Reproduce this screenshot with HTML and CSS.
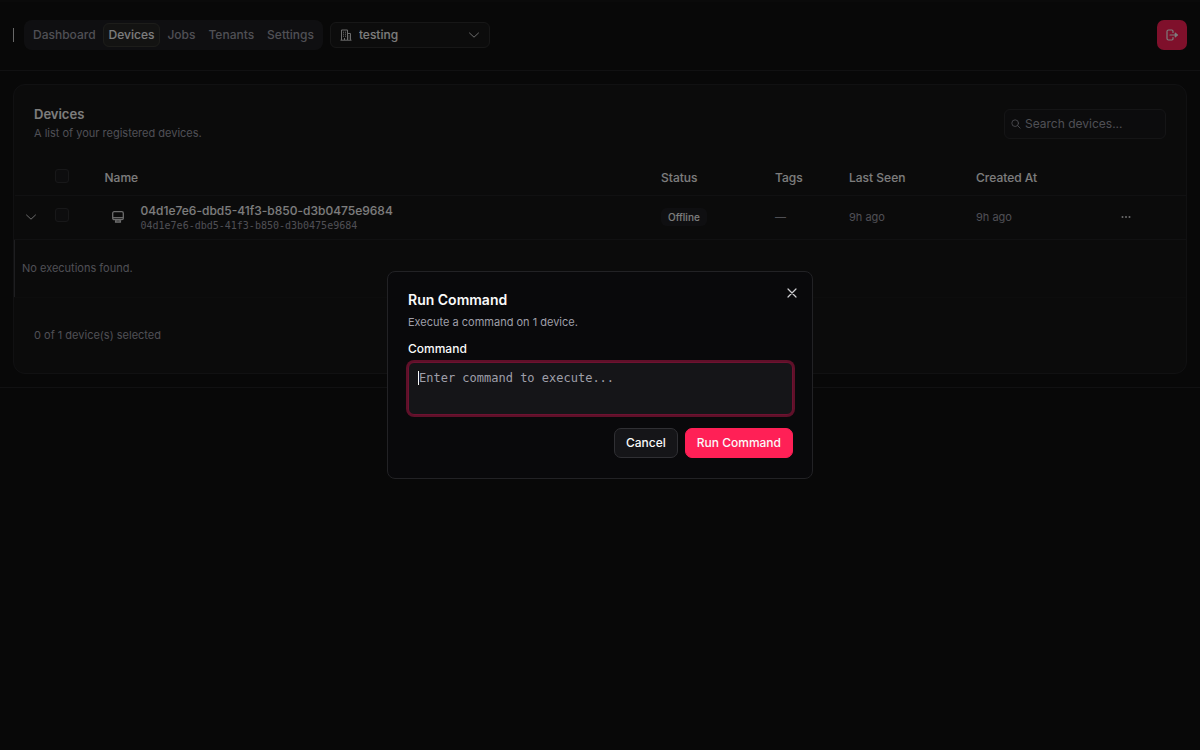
FILE: index.html
```html
<!DOCTYPE html>
<html lang="en">
<head>
  <meta charset="UTF-8">
  <meta name="viewport" content="width=device-width, initial-scale=1.0">
  <title>Devices</title>
  <link rel="stylesheet" href="styles.css">
</head>
<body>

  <div class="app">
    <header class="topbar">
      <span class="brand-mark"></span>
      <nav class="nav">
        <a class="nav-link" href="#">Dashboard</a>
        <a class="nav-link active" href="#">Devices</a>
        <a class="nav-link" href="#">Jobs</a>
        <a class="nav-link" href="#">Tenants</a>
        <a class="nav-link" href="#">Settings</a>
      </nav>
      <div class="tenant-select">
        <svg class="tenant-icon" viewBox="0 0 12 12" fill="none" stroke="currentColor">
          <path d="M1.500 11V1h6v10M7.500 4.500h3V11M0.500 11.200h11"/>
          <path d="M3 3.200h1M5 3.200h1M3 5.200h1M5 5.200h1M3 7.200h1M5 7.200h1M4.500 11V9M9 6.500v1M9 8.500v1"/>
        </svg>
        <select aria-label="Tenant">
          <option>testing</option>
        </select>
        <svg class="tenant-chevron" viewBox="0 0 12 12" fill="none" stroke="currentColor" stroke-linecap="round" stroke-linejoin="round">
          <path d="M1.500 4L6 8.200 10.500 4"/>
        </svg>
      </div>
      <button class="logout" aria-label="Log out">
        <svg viewBox="0 0 12 12" fill="none" stroke="currentColor" stroke-width="1.2" stroke-linecap="round" stroke-linejoin="round">
          <path d="M7 3.500V2.200Q7 1 5.800 1H2.500Q1 1 1 2.500v7Q1 11 2.500 11h3.300Q7 11 7 9.800V8.500M4 6h7"/>
          <path d="M9.300 4.200L11.300 6 9.300 7.800z" fill="currentColor"/>
        </svg>
      </button>
    </header>

    <main class="content">
      <section class="card">
        <div class="card-header">
          <div>
            <h1>Devices</h1>
            <p>A list of your registered devices.</p>
          </div>
          <div class="search">
            <svg viewBox="0 0 12 12" fill="none" stroke="currentColor" stroke-linecap="round">
              <circle cx="5" cy="5" r="4"/>
              <path d="M8 8L11 11"/>
            </svg>
            <input type="search" aria-label="Search devices" placeholder="Search devices...">
          </div>
        </div>

        <table class="devices">
          <colgroup>
            <col class="col-expand">
            <col class="col-check">
            <col class="col-name">
            <col class="col-status">
            <col class="col-tags">
            <col class="col-seen">
            <col class="col-created">
            <col class="col-actions">
          </colgroup>
          <thead>
            <tr>
              <th></th>
              <th><input type="checkbox" aria-label="Select all"></th>
              <th>Name</th>
              <th>Status</th>
              <th>Tags</th>
              <th>Last Seen</th>
              <th>Created At</th>
              <th></th>
            </tr>
          </thead>
          <tbody>
            <tr class="device-row">
              <td>
                <button class="icon-button" aria-label="Collapse row">
                  <svg viewBox="0 0 12 12" fill="none" stroke="currentColor" stroke-linecap="round" stroke-linejoin="round">
                    <path d="M1.500 4L6 8.200 10.500 4"/>
                  </svg>
                </button>
              </td>
              <td><input type="checkbox" aria-label="Select device"></td>
              <td>
                <div class="device">
                  <svg viewBox="0 0 12 12" fill="none" stroke="currentColor" stroke-width="1.3" stroke-linejoin="round">
                    <rect x="0.700" y="0.700" width="10.600" height="8" rx="1.500"/>
                    <path d="M1 6.700h10"/>
                    <path d="M4 8.700h4l.5 2.500h-5z" fill="currentColor" fill-opacity="0.5"/>
                  </svg>
                  <div>
                    <div class="device-name">04d1e7e6-dbd5-41f3-b850-d3b0475e9684</div>
                    <div class="device-id">04d1e7e6-dbd5-41f3-b850-d3b0475e9684</div>
                  </div>
                </div>
              </td>
              <td><span class="badge">Offline</span></td>
              <td class="muted">—</td>
              <td class="muted">9h ago</td>
              <td class="muted">9h ago</td>
              <td>
                <button class="icon-button" aria-label="Device actions">
                  <svg viewBox="0 0 12 12" fill="currentColor">
                    <circle cx="2.500" cy="6" r="1"/>
                    <circle cx="6" cy="6" r="1"/>
                    <circle cx="9.500" cy="6" r="1"/>
                  </svg>
                </button>
              </td>
            </tr>
            <tr class="executions">
              <td colspan="8">No executions found.</td>
            </tr>
          </tbody>
        </table>

        <div class="card-footer">0 of 1 device(s) selected</div>
      </section>
    </main>
  </div>

  <div class="overlay">
    <form class="dialog" role="dialog" aria-labelledby="dialog-title">
      <button type="button" class="dialog-close" aria-label="Close">
        <svg viewBox="0 0 12 12" fill="none" stroke="currentColor" stroke-width="1.2" stroke-linecap="round">
          <path d="M2 2l8 8M10 2l-8 8"/>
        </svg>
      </button>
      <h2 id="dialog-title">Run Command</h2>
      <p>Execute a command on 1 device.</p>
      <label for="command">Command</label>
      <div class="command-field">
        <textarea id="command" placeholder="Enter command to execute..."></textarea>
        <span class="caret"></span>
      </div>
      <div class="dialog-actions">
        <button type="button" class="btn">Cancel</button>
        <button type="submit" class="btn btn-primary">Run Command</button>
      </div>
    </form>
  </div>

</body>
</html>
```
FILE: styles.css
```css
* {
  box-sizing: border-box;
}

body {
  margin: 0;
  background: #101010;
  color: #fafafa;
  font-family: Inter, sans-serif;
  font-size: 12px;
  line-height: 16px;
}

h1, h2, p {
  margin: 0;
}

button, input, select, textarea {
  font: inherit;
  color: inherit;
}

button {
  cursor: pointer;
}

svg {
  display: block;
  width: 12px;
  height: 12px;
  flex-shrink: 0;
}

.app {
  border-top: 2px solid #151515;
  border-bottom: 1px solid #222224;
}

/* top bar */

.topbar {
  display: flex;
  align-items: center;
  padding: 18px 13px 20px;
  border-bottom: 1px solid #222224;
}

.brand-mark {
  width: 1px;
  height: 14px;
  margin-right: 10px;
  background: #d0d0d0;
}

.nav {
  display: flex;
  gap: 1px;
  padding: 3px;
  border-radius: 8px;
  background: #1f1f22;
}

.nav-link {
  padding: 3px 5px;
  border: 1px solid transparent;
  border-radius: 6px;
  color: #9f9fa9;
  font-weight: 500;
  text-decoration: none;
}

.nav-link.active {
  background: #272725;
  border-color: #3a3a34;
  color: #fafafa;
}

.tenant-select {
  position: relative;
  width: 160px;
  margin-left: 7px;
}

.tenant-select select {
  display: block;
  width: 100%;
  height: 26px;
  padding: 0 28px;
  appearance: none;
  background: #181818;
  border: 1px solid #2e2e2e;
  border-radius: 6px;
  font-weight: 500;
}

.tenant-select svg {
  position: absolute;
  top: 7px;
  color: #d8d8d8;
}

.tenant-icon {
  left: 10px;
}

.tenant-chevron {
  right: 10px;
}

.logout {
  margin-left: auto;
  padding: 9px;
  border: 0;
  border-radius: 7px;
  background: #ff2056;
}

/* devices card */

.content {
  padding: 13px;
}

.card {
  border: 1px solid #222224;
  border-radius: 12px;
  background: #161617;
}

.card-header {
  display: flex;
  align-items: center;
  justify-content: space-between;
  padding: 20px 20px 19px;
}

.card-header h1 {
  margin-bottom: 1px;
  font-size: 13px;
  line-height: 18px;
  font-weight: 600;
}

.card-header p {
  font-size: 11px;
  line-height: 18px;
  color: #9f9fa9;
}

.search {
  position: relative;
  width: 162px;
}

.search svg {
  position: absolute;
  top: 10px;
  left: 7px;
  width: 10px;
  height: 10px;
  color: #9f9fa9;
}

.search input {
  display: block;
  width: 100%;
  height: 30px;
  padding: 0 10px 0 20px;
  appearance: none;
  background: #18181a;
  border: 1px solid #2a2a2d;
  border-radius: 6px;
}

::placeholder {
  color: #9f9fa9;
  opacity: 1;
}

.devices {
  width: 100%;
  table-layout: fixed;
  border-collapse: collapse;
}

.col-expand { width: 32px; }
.col-check { width: 50px; }
.col-status { width: 114px; }
.col-tags { width: 74px; }
.col-seen { width: 127px; }
.col-created { width: 142px; }
.col-actions { width: 76px; }

.devices th,
.devices td {
  padding: 0 8px;
  border-bottom: 1px solid #222224;
  text-align: left;
}

.devices th {
  height: 34px;
  font-weight: 500;
}

.devices input {
  display: block;
  width: 14px;
  height: 14px;
  margin: 0 0 4px;
  appearance: none;
  background: #1b1b1d;
  border: 1px solid #303033;
  border-radius: 3px;
}

.device-row td {
  height: 44px;
}

.device {
  display: flex;
  align-items: center;
  gap: 17px;
  padding-left: 7px;
}

.device svg,
.icon-button {
  color: #d8d8d8;
}

.device-name {
  font-weight: 500;
}

.device-id {
  font-family: "DejaVu Sans Mono", monospace;
  font-size: 10px;
  line-height: 13px;
  color: #9f9fa9;
}

.badge {
  display: inline-block;
  padding: 1px 7px;
  border-radius: 6px;
  background: #1f1f23;
  font-size: 10px;
  font-weight: 500;
}

.devices .muted {
  font-size: 11px;
  color: #9f9fa9;
}

.icon-button {
  display: block;
  padding: 2px;
  border: 0;
  background: none;
}

.devices .executions td {
  height: 58px;
  padding: 0 7px;
  border-left: 1px solid #3c3c40;
  border-bottom-color: #1a1a1b;
  font-size: 11px;
  color: #9f9fa9;
}

.card-footer {
  padding: 29px 20px 30px;
  font-size: 11px;
  color: #9f9fa9;
}

/* run command dialog */

.overlay {
  position: fixed;
  inset: 0;
  display: flex;
  align-items: center;
  justify-content: center;
  background: rgba(0, 0, 0, 0.5);
}

.dialog {
  position: relative;
  width: 426px;
  padding: 20px 19px 20px 20px;
  border: 1px solid #222225;
  border-radius: 8px;
  background: #09090b;
}

.dialog h2 {
  font-size: 14px;
  line-height: 16px;
  font-weight: 600;
}

.dialog p {
  margin: 6px 0 11px;
  font-size: 11px;
  color: #9f9fa9;
}

.dialog label {
  display: block;
  margin-bottom: 5px;
  font-weight: 500;
}

.command-field {
  position: relative;
}

.dialog textarea {
  display: block;
  width: 100%;
  height: 53px;
  padding: 7px 10px;
  resize: none;
  outline: none;
  background: #151518;
  border: 1px solid #6e1231;
  border-radius: 6px;
  box-shadow: 0 0 0 2px #5f1029;
  font-family: "DejaVu Sans Mono", monospace;
}

.caret {
  position: absolute;
  top: 9px;
  left: 10px;
  width: 1px;
  height: 14px;
  background: #fafafa;
}

.dialog-close {
  position: absolute;
  top: 13px;
  right: 12px;
  padding: 2px;
  border: 0;
  background: none;
  color: #d0d0d3;
}

.dialog-actions {
  display: flex;
  justify-content: flex-end;
  gap: 7px;
  margin-top: 13px;
}

.btn {
  padding: 6px 11px;
  border: 1px solid #303034;
  border-radius: 7px;
  background: #151518;
  font-weight: 500;
}

.btn-primary {
  border-color: #ff2056;
  background: #ff2056;
}
```
